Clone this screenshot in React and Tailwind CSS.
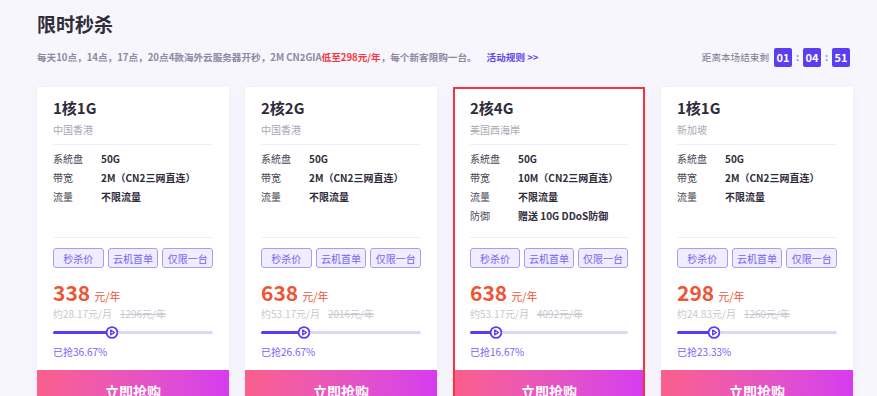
const plans = [
  {
    name: "1核1G",
    region: "中国香港",
    specs: [
      ["系統盘", "50G"],
      ["带宽", "2M（CN2三网直连）"],
      ["流量", "不限流量"],
    ],
    price: "338",
    monthly: "约28.17元/月",
    original: "1296元/年",
    sold: 36.67,
  },
  {
    name: "2核2G",
    region: "中国香港",
    specs: [
      ["系統盘", "50G"],
      ["带宽", "2M（CN2三网直连）"],
      ["流量", "不限流量"],
    ],
    price: "638",
    monthly: "约53.17元/月",
    original: "2016元/年",
    sold: 26.67,
  },
  {
    name: "2核4G",
    region: "美国西海岸",
    specs: [
      ["系統盘", "50G"],
      ["带宽", "10M（CN2三网直连）"],
      ["流量", "不限流量"],
      ["防御", "赠送 10G DDoS防御"],
    ],
    price: "638",
    monthly: "约53.17元/月",
    original: "4092元/年",
    sold: 16.67,
    active: true,
  },
  {
    name: "1核1G",
    region: "新加坡",
    specs: [
      ["系統盘", "50G"],
      ["带宽", "2M（CN2三网直连）"],
      ["流量", "不限流量"],
    ],
    price: "298",
    monthly: "约24.83元/月",
    original: "1260元/年",
    sold: 23.33,
  },
];

const tags = ["秒杀价", "云机首单", "仅限一台"];

function Knob() {
  return (
    <svg width="13" height="13" viewBox="0 0 13 13" className="block">
      <circle cx="6.5" cy="6.5" r="5.4" fill="#fff" stroke="#5a3cf2" strokeWidth="1.8" />
      <path d="M5.2 4.1 L9 6.5 L5.2 8.9 Z" fill="none" stroke="#5a3cf2" strokeWidth="1.3" strokeLinejoin="round" />
    </svg>
  );
}

function PlanCard({ plan }) {
  return (
    <div
      className={
        plan.active
          ? "w-[192px] shrink-0 bg-white border-2 border-[#f4343c] pt-[8px] shadow-[0_2px_12px_rgba(110,90,200,0.07)]"
          : "w-[192px] shrink-0 bg-white pt-[10px] shadow-[0_2px_12px_rgba(110,90,200,0.07)]"
      }
    >
      <div className={plan.active ? "px-[15px]" : "px-4"}>
        <div className="h-[22px] text-[15px] font-bold leading-[22px] text-[#2f2d3a]">{plan.name}</div>
        <div className="mt-[3px] h-4 text-[10px] leading-4 text-[#aaa8b4]">{plan.region}</div>
        <div className="mt-[6px] h-px bg-[#f1edfa]" />
        <div className="h-[92px] pt-[4px]">
          {plan.specs.map(([k, v]) => (
            <div key={k} className="flex h-[19px] items-center text-[10px]">
              <span className="w-12 text-[#4a4856]">{k}</span>
              <span className="font-bold text-[#2f2d3a]">{v}</span>
            </div>
          ))}
        </div>
        <div className="h-px bg-[#f1edfa]" />
        <div className="mt-[10px] flex h-5 gap-1">
          {tags.map((t) => (
            <div
              key={t}
              className="flex flex-1 items-center justify-center rounded-[3px] border border-[#a89cf7] bg-[#f0edff] text-[10px] text-[#7563ef]"
            >
              {t}
            </div>
          ))}
        </div>
        <div className="mt-[10px] flex h-[28px] items-baseline gap-1 text-[#ee5536]">
          <span className="text-[21px] font-bold leading-[28px]">{plan.price}</span>
          <span className="text-[11px]">元/年</span>
        </div>
        <div className="flex h-4 items-center gap-[8px] text-[10px] leading-4 text-[#c8c7cf]">
          <span>{plan.monthly}</span>
          <span className="line-through">{plan.original}</span>
        </div>
        <div className="relative mt-[4px] h-[12px]">
          <div className="absolute left-0 right-0 top-[5px] h-[3px] rounded-full bg-[#ddd8fb]" />
          <div className="absolute left-0 top-[5px] h-[3px] rounded-full bg-[#5a3cf2]" style={{ width: `${plan.sold}%` }} />
          <div className="absolute top-[-0.5px] -translate-x-1/2" style={{ left: `${plan.sold}%` }}>
            <Knob />
          </div>
        </div>
        <div className="mt-[6px] h-4 text-[10px] leading-4 text-[#7a62f2]">已抢{plan.sold.toFixed(2)}%</div>
      </div>
      <button
        type="button"
        className="mt-[10px] block h-[42px] w-full bg-gradient-to-r from-[#fb5f8b] to-[#d63bef] text-[14px] font-bold text-white"
      >
        立即抢购
      </button>
    </div>
  );
}

export default function App() {
  return (
    <div
      className="min-h-screen overflow-hidden bg-[#f8f6fd] pl-[37px] pt-[11px]"
      style={{ fontFamily: '"Noto Sans CJK SC", "Noto Sans", sans-serif' }}
    >
      <h1 className="h-[26px] text-[19px] font-bold leading-[26px] text-[#2f2d3a]">限时秒杀</h1>
      <div className="mt-[11px] flex h-[19px] w-[816px] items-center justify-between pr-[3px]">
        <p className="text-[9.6px] font-bold text-[#8c89a3]">
          每天10点，14点，17点，20点4款海外云服务器开秒，2M CN2GIA
          <span className="text-[#f5373f]">低至298元/年</span>
          ，每个新客限购一台。
          <span className="ml-[10px] text-[#6246ea]">活动规则 &gt;&gt;</span>
        </p>
        <div className="flex items-center text-[9.6px] text-[#7d7a8e]">
          <span className="mr-[5px]">距离本场结束剩</span>
          <span className="flex h-[19px] w-[18px] items-center justify-center rounded-[2px] bg-[#5b3ef0] text-[11px] font-bold text-white">01</span>
          <span className="w-[11px] text-center font-bold">:</span>
          <span className="flex h-[19px] w-[18px] items-center justify-center rounded-[2px] bg-[#5b3ef0] text-[11px] font-bold text-white">04</span>
          <span className="w-[11px] text-center font-bold">:</span>
          <span className="flex h-[19px] w-[18px] items-center justify-center rounded-[2px] bg-[#5b3ef0] text-[11px] font-bold text-white">51</span>
        </div>
      </div>
      <div className="mt-[20px] flex gap-4">
        {plans.map((p, i) => (
          <PlanCard key={i} plan={p} />
        ))}
      </div>
    </div>
  );
}
